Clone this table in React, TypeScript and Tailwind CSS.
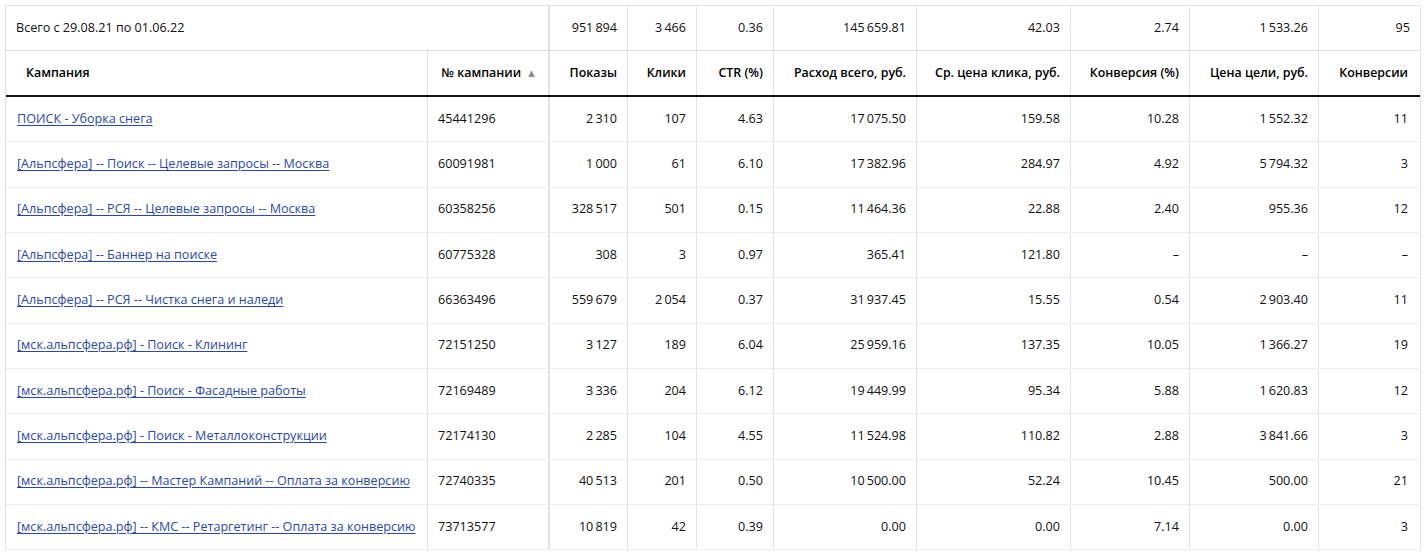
import React from 'react';

const cols = 'grid-cols-[422px_122px_78px_69px_77px_143px_154px_119px_129px_101px]';

const headers = [
  'Показы',
  'Клики',
  'CTR (%)',
  'Расход всего, руб.',
  'Ср. цена клика, руб.',
  'Конверсия (%)',
  'Цена цели, руб.',
  'Конверсии',
];

const totals = ['951 894', '3 466', '0.36', '145 659.81', '42.03', '2.74', '1 533.26', '95'];

const rows: [string, string, string[]][] = [
  ['ПОИСК - Уборка снега', '45441296', ['2 310', '107', '4.63', '17 075.50', '159.58', '10.28', '1 552.32', '11']],
  ['[Альпсфера] -- Поиск -- Целевые запросы -- Москва', '60091981', ['1 000', '61', '6.10', '17 382.96', '284.97', '4.92', '5 794.32', '3']],
  ['[Альпсфера] -- РСЯ -- Целевые запросы -- Москва', '60358256', ['328 517', '501', '0.15', '11 464.36', '22.88', '2.40', '955.36', '12']],
  ['[Альпсфера] -- Баннер на поиске', '60775328', ['308', '3', '0.97', '365.41', '121.80', '–', '–', '–']],
  ['[Альпсфера] -- РСЯ -- Чистка снега и наледи', '66363496', ['559 679', '2 054', '0.37', '31 937.45', '15.55', '0.54', '2 903.40', '11']],
  ['[мск.альпсфера.рф] - Поиск - Клининг', '72151250', ['3 127', '189', '6.04', '25 959.16', '137.35', '10.05', '1 366.27', '19']],
  ['[мск.альпсфера.рф] - Поиск - Фасадные работы', '72169489', ['3 336', '204', '6.12', '19 449.99', '95.34', '5.88', '1 620.83', '12']],
  ['[мск.альпсфера.рф] - Поиск - Металлоконструкции', '72174130', ['2 285', '104', '4.55', '11 524.98', '110.82', '2.88', '3 841.66', '3']],
  ['[мск.альпсфера.рф] -- Мастер Кампаний -- Оплата за конверсию', '72740335', ['40 513', '201', '0.50', '10 500.00', '52.24', '10.45', '500.00', '21']],
  ['[мск.альпсфера.рф] -- КМС -- Ретаргетинг -- Оплата за конверсию', '73713577', ['10 819', '42', '0.39', '0.00', '0.00', '7.14', '0.00', '3']],
];

// numbers use a thin space as thousands separator
const num = (v: string) => v.replace(/ /g, '\u2009');

export default function App() {
  return (
    <div className="min-h-[558px] bg-white pt-[5px] pl-[5px] pr-[5px] font-['Open_Sans',sans-serif] text-[12.6px] text-[#111] whitespace-nowrap">
      <div className="w-[1416px] border-l border-t border-r border-[#e4e4e4]">
        {/* Totals */}
        <div className={`grid ${cols} h-[45px] border-b border-[#dedede]`}>
          <div className="col-span-2 flex items-center pl-[10px] border-r-2 border-[#e2e2e2]">
            Всего с 29.08.21 по 01.06.22
          </div>
          {totals.map((v, i) => (
            <div
              key={i}
              className={`flex items-center justify-end pr-[10px] ${i < 7 ? 'border-r border-[#e4e4e4]' : ''}`}
            >
              {num(v)}
            </div>
          ))}
        </div>

        {/* Header */}
        <div className={`grid ${cols} h-[46px] border-b-2 border-[#111] font-semibold text-[12.4px] text-black`}>
          <div className="flex items-center pl-[20px] border-r border-[#e4e4e4]">Кампания</div>
          <div className="flex items-center justify-end pr-[11px] gap-[5px] border-r-2 border-[#e2e2e2]">
            <span>№ кампании</span>
            <span className="text-[11px] text-[#8a8a8a]">▲</span>
          </div>
          {headers.map((h, i) => (
            <div
              key={h}
              className={`flex items-center justify-end ${i < 7 ? 'pr-[10px] border-r border-[#e4e4e4]' : 'pr-[12px]'}`}
            >
              {h}
            </div>
          ))}
        </div>

        {/* Rows */}
        {rows.map(([name, id, vals]) => (
          <div key={id} className={`grid ${cols} h-[45.35px] border-b border-[#ececec]`}>
            <div className="flex items-center pl-[11px] border-r border-[#e4e4e4]">
              <a href="#" className="text-[#2a49a6] underline underline-offset-[2px] decoration-[#2a49a6]">
                {name}
              </a>
            </div>
            <div className="flex items-center pl-[10px] border-r-2 border-[#e2e2e2]">{id}</div>
            {vals.map((v, i) => (
              <div
                key={i}
                className={`flex items-center justify-end ${i < 7 ? 'pr-[10px] border-r border-[#e4e4e4]' : 'pr-[12px]'}`}
              >
                {num(v)}
              </div>
            ))}
          </div>
        ))}
      </div>
    </div>
  );
}
